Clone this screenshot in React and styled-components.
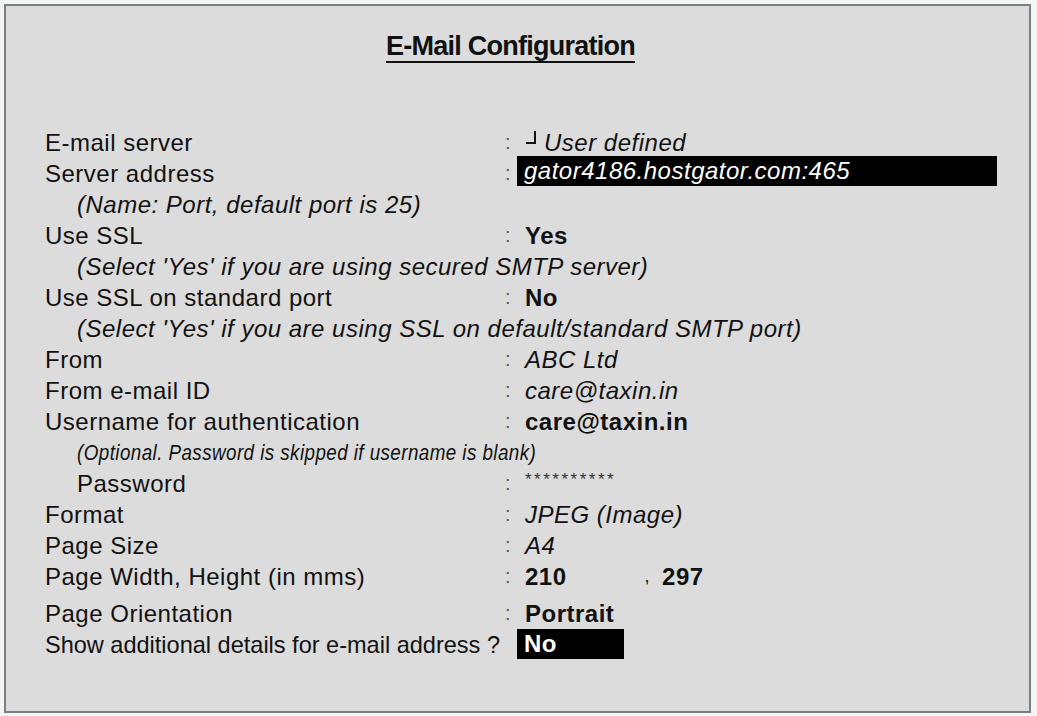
import React from 'react';
import styled, { createGlobalStyle } from 'styled-components';

const GlobalStyle = createGlobalStyle`
  html, body {
    margin: 0;
    padding: 0;
    background: #f3f6f6;
  }
  body {
    font-family: 'Liberation Sans', Arial, sans-serif;
    color: #111;
  }
`;

const Panel = styled.div`
  margin: 4px 0 0 4px;
  width: 1023px;
  height: 680px;
  border: 2px solid #7e7e7e;
  background: #dcdcdc;
  padding-top: 25px;
  box-sizing: content-box;
`;

const TitleWrap = styled.div`
  text-align: center;
  padding-right: 14px;
  height: 96px;
`;

const Title = styled.h1`
  display: inline-block;
  margin: 0;
  font-size: 27px;
  line-height: 30px;
  font-weight: 700;
  letter-spacing: -0.75px;
  color: #111;
  border-bottom: 2px solid #111;
`;

const Form = styled.div`
  display: flex;
  flex-direction: column;
  padding-left: 39px;
  font-size: 24px;
  line-height: 31px;
  letter-spacing: 0.5px;
`;

const Row = styled.div`
  display: grid;
  grid-template-columns: 460px 12px 1fr;
  height: 31px;
  margin-top: ${(p) => (p.$gap ? '6px' : '0')};
`;

const Label = styled.div`
  grid-column: ${(p) => (p.$wide ? '1 / span 2' : '1')};
  padding-left: ${(p) => (p.$indent ? '32px' : '0')};
  letter-spacing: ${(p) => (p.$wide ? '0' : 'inherit')};
  white-space: nowrap;
  overflow: hidden;
`;

const Squeezed = styled.span`
  display: inline-block;
  transform: scaleX(${(p) => p.$scale});
  transform-origin: left center;
`;

const Note = styled.div`
  height: 31px;
  padding-left: 32px;
  font-style: italic;
  white-space: nowrap;
  font-size: ${(p) => p.$size || '24px'};
`;

const Colon = styled.div`
  color: #555;
  font-size: 20px;
  letter-spacing: 0;
`;

const Value = styled.div`
  padding-left: 8px;
  white-space: nowrap;
  font-weight: ${(p) => (p.$bold ? 700 : 400)};
  font-style: ${(p) => (p.$italic ? 'italic' : 'normal')};
  display: flex;
  align-items: center;
`;

const Highlight = styled.div`
  background: #000;
  color: #fff;
  width: ${(p) => p.$w}px;
  height: 30px;
  line-height: 30px;
  padding-left: 7px;
  box-sizing: border-box;
  margin-top: ${(p) => p.$up || 0}px;
  font-weight: ${(p) => (p.$bold ? 700 : 400)};
  font-style: ${(p) => (p.$italic ? 'italic' : 'normal')};
  white-space: nowrap;
`;

const Stars = styled.span`
  font-size: 17px;
  letter-spacing: 2.5px;
  line-height: 17px;
  color: #333;
  margin-top: -8px;
`;

const Comma = styled.span`
  margin-left: 78px;
  margin-right: 12px;
  font-weight: 400;
  font-size: 18px;
`;

const Hook = () => (
  <svg width="14" height="18" viewBox="0 0 14 18" style={{ marginRight: 5, marginTop: -10 }}>
    <path d="M1 14 H10 V2" fill="none" stroke="#111" strokeWidth="2" />
  </svg>
);

export default function App() {
  return (
    <>
      <GlobalStyle />
      <Panel>
        <TitleWrap>
          <Title>E-Mail Configuration</Title>
        </TitleWrap>
        <Form>
          <Row>
            <Label>E-mail server</Label>
            <Colon>:</Colon>
            <Value $italic>
              <Hook />
              User defined
            </Value>
          </Row>

          <Row>
            <Label>Server address</Label>
            <Colon>:</Colon>
            <div>
              <Highlight $w={480} $up={-2} $italic>
                gator4186.hostgator.com:465
              </Highlight>
            </div>
          </Row>

          <Note>(Name: Port, default port is 25)</Note>

          <Row>
            <Label>Use SSL</Label>
            <Colon>:</Colon>
            <Value $bold>Yes</Value>
          </Row>

          <Note>(Select 'Yes' if you are using secured SMTP server)</Note>

          <Row>
            <Label>Use SSL on standard port</Label>
            <Colon>:</Colon>
            <Value $bold>No</Value>
          </Row>

          <Note>(Select 'Yes' if you are using SSL on default/standard SMTP port)</Note>

          <Row>
            <Label>From</Label>
            <Colon>:</Colon>
            <Value $italic>ABC Ltd</Value>
          </Row>

          <Row>
            <Label>From e-mail ID</Label>
            <Colon>:</Colon>
            <Value $italic>care@taxin.in</Value>
          </Row>

          <Row>
            <Label>Username for authentication</Label>
            <Colon>:</Colon>
            <Value $bold>care@taxin.in</Value>
          </Row>

          <Note $size="22px">
            <Squeezed $scale={0.855}>(Optional. Password is skipped if username is blank)</Squeezed>
          </Note>

          <Row>
            <Label $indent>Password</Label>
            <Colon>:</Colon>
            <Value>
              <Stars>**********</Stars>
            </Value>
          </Row>

          <Row>
            <Label>Format</Label>
            <Colon>:</Colon>
            <Value $italic>JPEG (Image)</Value>
          </Row>

          <Row>
            <Label>Page Size</Label>
            <Colon>:</Colon>
            <Value $italic>A4</Value>
          </Row>

          <Row>
            <Label>Page Width, Height (in mms)</Label>
            <Colon>:</Colon>
            <Value $bold>
              210
              <Comma>,</Comma>
              297
            </Value>
          </Row>

          <Row $gap>
            <Label>Page Orientation</Label>
            <Colon>:</Colon>
            <Value $bold>Portrait</Value>
          </Row>

          <Row>
            <Label $wide>
              <Squeezed $scale={0.98}>Show additional details for e-mail address ?</Squeezed>
            </Label>
            <div>
              <Highlight $w={107} $bold>
                No
              </Highlight>
            </div>
          </Row>
        </Form>
      </Panel>
    </>
  );
}
